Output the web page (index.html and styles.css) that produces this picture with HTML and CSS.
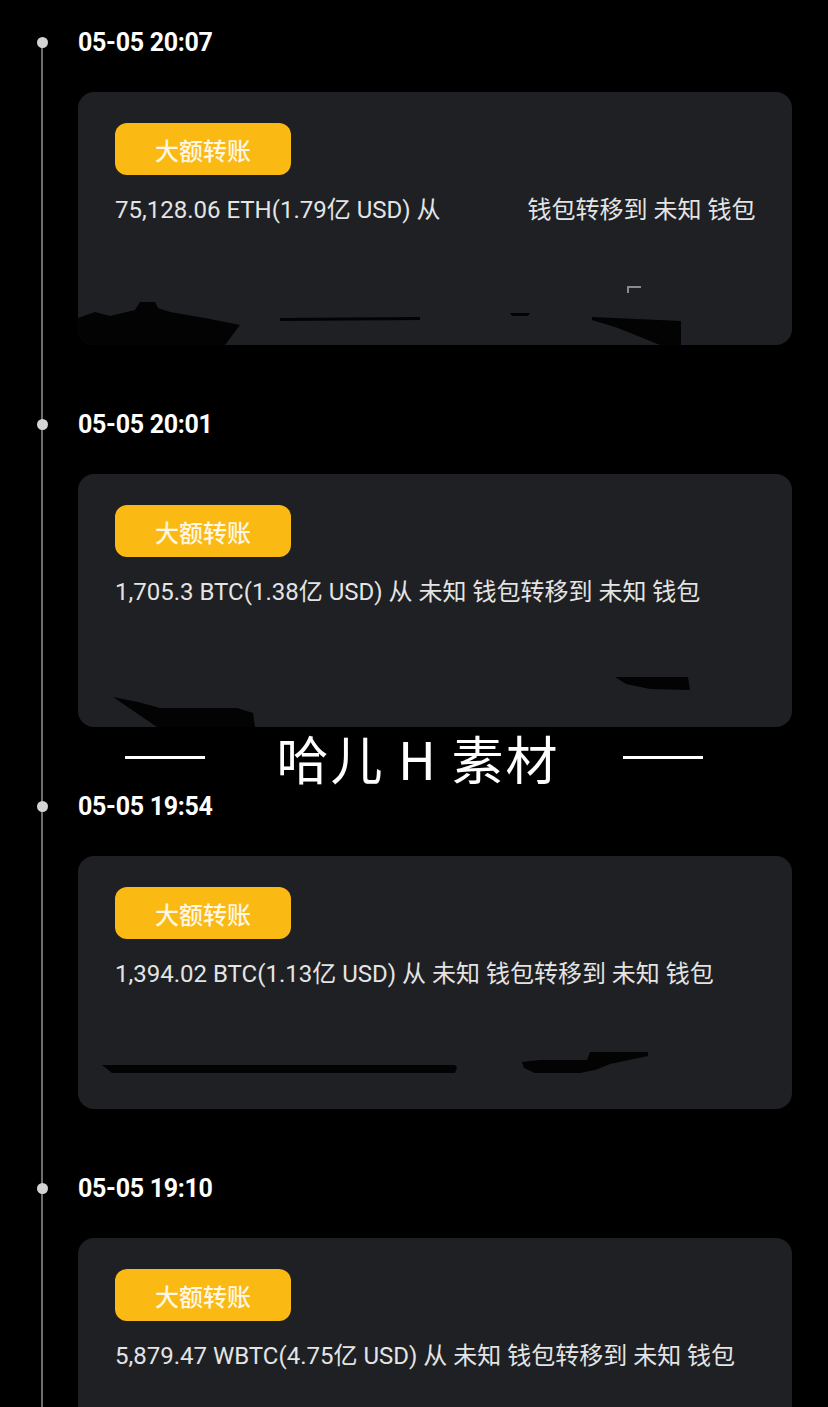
FILE: index.html
```html
<!DOCTYPE html>
<html lang="zh-CN">

<head>
    <meta charset="utf-8" />
    <meta name="viewport" content="width=device-width" />
    <title>大额转账</title>
    <link rel="stylesheet" href="styles.css">
</head>
<body>
    <!-- Timeline start -->
    <main class="timeline">
        <section class="item">
            <div class="item-time"><span class="dot"></span><time>05-05 20:07</time></div>
            <div class="card">
                <span class="tag">大额转账</span>
                <p class="desc">75,128.06 ETH(1.79亿 USD) 从<span class="blank"></span>钱包转移到 未知 钱包</p>
                <svg class="scribble" viewBox="0 0 714 253" preserveAspectRatio="none">
                    <path d="M0 226 L17 220 L32 224 L57 218 L62 210 L77 210 L80 216 L92 220 L127 226 L162 233 L147 253 L0 253 Z" />
                    <path d="M202 226 L342 225 L342 228 L202 229 Z" />
                    <path d="M432 221 L452 221 L450 224 L434 224 Z" />
                    <path d="M514 225 L603 229 L603 253 L582 253 L540 236 L514 228 Z" />
                    <path class="mark" d="M550 201 V195 H563" />
                </svg>
            </div>
        </section>

        <section class="item">
            <div class="item-time"><span class="dot"></span><time>05-05 20:01</time></div>
            <div class="card">
                <span class="tag">大额转账</span>
                <p class="desc">1,705.3 BTC(1.38亿 USD) 从 未知 钱包转移到 未知 钱包</p>
                <svg class="scribble" viewBox="0 0 714 253" preserveAspectRatio="none">
                    <path d="M35 223 L60 228 L82 234 L159 234 L175 239 L177 253 L79 253 Z" />
                    <path d="M537 203 L610 203 L612 216 L572 215 L548 210 Z" />
                </svg>
            </div>
        </section>

        <section class="item">
            <div class="item-time"><span class="dot"></span><time>05-05 19:54</time></div>
            <div class="card">
                <span class="tag">大额转账</span>
                <p class="desc">1,394.02 BTC(1.13亿 USD) 从 未知 钱包转移到 未知 钱包</p>
                <svg class="scribble" viewBox="0 0 714 253" preserveAspectRatio="none">
                    <path d="M24 209 L377 209 L379 212 L377 217 L34 217 Z" />
                    <path d="M444 206 L462 204 L509 204 L512 196 L570 196 L570 200 L532 208 L517 214 L502 217 L457 217 L446 212 Z" />
                </svg>
            </div>
        </section>

        <section class="item">
            <div class="item-time"><span class="dot"></span><time>05-05 19:10</time></div>
            <div class="card">
                <span class="tag">大额转账</span>
                <p class="desc">5,879.47 WBTC(4.75亿 USD) 从 未知 钱包转移到 未知 钱包</p>
            </div>
        </section>
    </main>
    <!-- Timeline end -->

    <!-- Watermark -->
    <div class="watermark">
        <span class="wm-line"></span>
        <span class="wm-text">哈儿 H 素材</span>
        <span class="wm-line"></span>
    </div>
</body>

</html>
```

FILE: styles.css
```css
:root {
    --bg-color: #000;
    --card-color: #1e2023;
    --tag-color: #fbb913;
    --line-color: #6e6e6e;
    --font-family: Roboto, "Noto Sans CJK SC", sans-serif;
}

* {
    box-sizing: border-box;
    margin: 0;
    padding: 0;
}

html {
    width: 100%;
}

body {
    background-color: var(--bg-color);
    font-family: var(--font-family);
    color: #fff;
    position: relative;
    overflow: hidden;
    height: 1407px;
}

.timeline {
    padding-top: 25px;
}

.item {
    position: relative;
    padding-bottom: 62px;
}

/* vertical line from this dot down to the next one */
.item::before {
    content: "";
    position: absolute;
    left: 41px;
    width: 2px;
    top: 17px;
    bottom: -17px;
    background-color: var(--line-color);
}

.item-time {
    display: flex;
    align-items: center;
    height: 34px;
}

.dot {
    width: 11px;
    height: 11px;
    border-radius: 50%;
    background-color: #d4d4d4;
    margin-left: 36.5px;
    margin-right: 30.5px;
    position: relative;
    z-index: 1;
}

.item-time time {
    font-size: 25px;
    font-weight: 700;
    letter-spacing: -0.3px;
}

.card {
    position: relative;
    margin: 33px 36px 0 78px;
    height: 253px;
    padding: 31px 37px;
    background-color: var(--card-color);
    border-radius: 16px;
}

.tag {
    display: inline-flex;
    align-items: center;
    justify-content: center;
    width: 176px;
    height: 52px;
    border-radius: 12px;
    background-color: var(--tag-color);
    color: #fff7e4;
    font-size: 24px;
    font-weight: 500;
}

.desc {
    margin-top: 19px;
    font-size: 24px;
    line-height: 32px;
    color: #e4e4e4;
    white-space: nowrap;
}

.blank {
    display: inline-block;
    width: 87px;
}

.scribble {
    position: absolute;
    left: 0;
    top: 0;
    width: 100%;
    height: 100%;
    fill: #030303;
    border-radius: 16px;
    overflow: hidden;
}

.scribble .mark {
    fill: none;
    stroke: #8a8a8a;
    stroke-width: 2;
}

.watermark {
    position: absolute;
    left: 0;
    right: 0;
    top: 728px;
    height: 58px;
    display: flex;
    align-items: center;
    justify-content: center;
}

.wm-line {
    width: 80px;
    height: 3px;
    background-color: #fff;
}

.wm-text {
    margin: 0 63px 0 71px;
    font-family: "Noto Sans CJK SC", sans-serif;
    font-size: 52px;
    font-weight: 400;
    color: #fff;
    letter-spacing: 2px;
}
```
